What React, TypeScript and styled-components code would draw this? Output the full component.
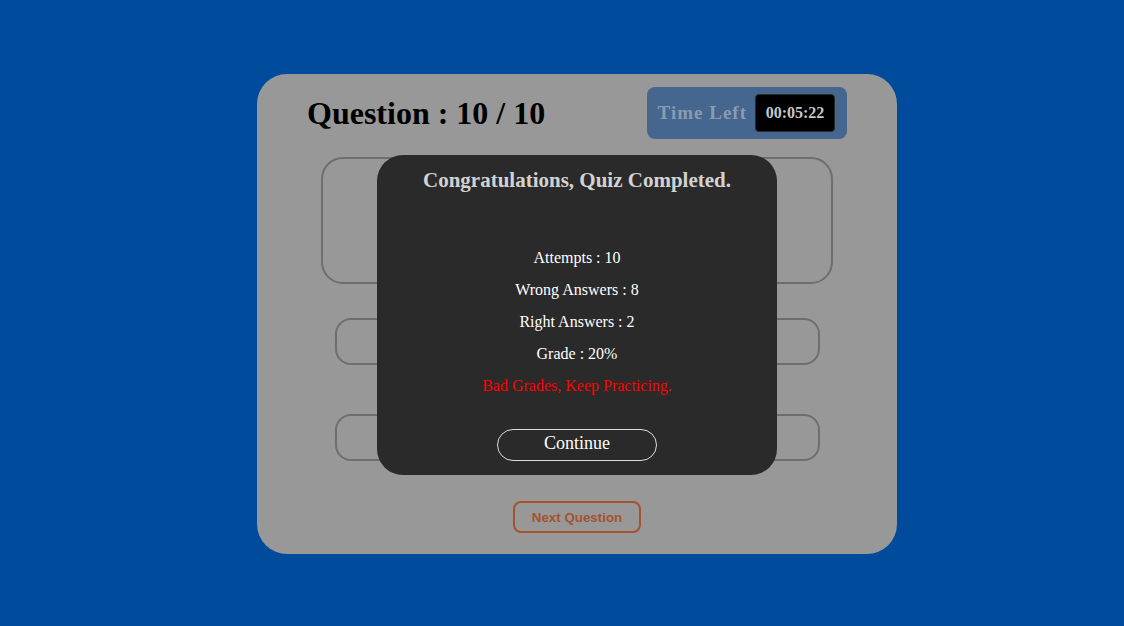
import React from 'react';
import styled, { createGlobalStyle } from 'styled-components';

const GlobalStyle = createGlobalStyle`
  html, body {
    margin: 0;
    padding: 0;
    background: #004b9b;
    font-family: "Liberation Serif", "Times New Roman", serif;
  }
`;

const Page = styled('div')`
  display: flex;
  justify-content: center;
  padding: 74px 0 0 30px;
  min-height: 626px;
  box-sizing: border-box;
`;

const QuizCard = styled('div')`
  position: relative;
  width: 640px;
  height: 480px;
  box-sizing: border-box;
  padding: 13px 50px 21px;
  background: #989898;
  border-radius: 30px;
  display: flex;
  flex-direction: column;
  align-items: center;
`;

const Header = styled('div')`
  align-self: stretch;
  display: flex;
  align-items: center;
  justify-content: space-between;
  height: 52px;
`;

const QuestionTitle = styled('h1')`
  margin: 0;
  font-size: 32px;
  font-weight: bold;
  color: #000;
`;

const Timer = styled('div')`
  display: flex;
  align-items: center;
  gap: 8px;
  height: 52px;
  box-sizing: border-box;
  padding: 7px 12px 7px 11px;
  background: #44668f;
  border-radius: 8px;
`;

const TimerLabel = styled('span')`
  font-size: 19px;
  font-weight: bold;
  letter-spacing: 1px;
  color: #8a9bb1;
`;

const TimerValue = styled('span')`
  display: flex;
  align-items: center;
  justify-content: center;
  width: 80px;
  height: 38px;
  box-sizing: border-box;
  background: #000;
  border: 1px solid #2a2a2a;
  border-radius: 4px;
  color: #c8c8c8;
  font-size: 16px;
  font-weight: bold;
`;

const QuestionBox = styled('div')`
  margin-top: 18px;
  width: 512px;
  height: 127px;
  box-sizing: border-box;
  border: 2px solid #6e6e6e;
  border-radius: 22px;
`;

const Options = styled('div')`
  margin-top: 34px;
  display: grid;
  grid-template-columns: 225px 225px;
  column-gap: 35px;
  row-gap: 49px;
`;

const Option = styled('div')`
  height: 47px;
  box-sizing: border-box;
  border: 2px solid #6e6e6e;
  border-radius: 16px;
`;

const NextButton = styled('button')`
  margin-top: 40px;
  width: 128px;
  height: 32px;
  background: transparent;
  border: 2px solid #a5532f;
  border-radius: 8px;
  color: #a5532f;
  font-family: "Liberation Sans", Arial, sans-serif;
  font-size: 13.333px;
  font-weight: bold;
  padding: 0;
`;

const Overlay = styled('div')`
  position: absolute;
  inset: 0;
  display: flex;
  align-items: center;
  justify-content: center;
`;

const ResultModal = styled('div')`
  width: 400px;
  height: 320px;
  margin-top: 2px;
  box-sizing: border-box;
  padding: 13px 20px 14px;
  background: #2a2a2a;
  border-radius: 26px;
  display: flex;
  flex-direction: column;
  align-items: center;
`;

const ModalTitle = styled('h2')`
  margin: 0;
  font-size: 21px;
  line-height: 24px;
  font-weight: bold;
  color: #d2d2d2;
`;

const Stats = styled('div')`
  margin-top: 57px;
  display: flex;
  flex-direction: column;
  align-items: center;
  gap: 14px;
`;

const StatLine = styled('p')<{ $warn?: boolean }>`
  margin: 0;
  font-size: 16px;
  line-height: 18px;
  color: ${(p) => (p.$warn ? '#ff0000' : '#ffffff')};
`;

const ContinueButton = styled('button')`
  margin-top: 34px;
  width: 160px;
  height: 32px;
  background: transparent;
  border: 1px solid #dcdcdc;
  border-radius: 16px;
  color: #fff;
  font-family: "Liberation Serif", "Times New Roman", serif;
  font-size: 18px;
  padding: 0 0 3px;
`;

const stats = [
  'Attempts : 10',
  'Wrong Answers : 8',
  'Right Answers : 2',
  'Grade : 20%',
];

export default function App() {
  return (
    <>
      <GlobalStyle />
      <Page>
        <QuizCard>
          <Header>
            <QuestionTitle>Question : 10 / 10</QuestionTitle>
            <Timer>
              <TimerLabel>Time Left</TimerLabel>
              <TimerValue>00:05:22</TimerValue>
            </Timer>
          </Header>
          <QuestionBox />
          <Options>
            <Option />
            <Option />
            <Option />
            <Option />
          </Options>
          <NextButton>Next Question</NextButton>
          <Overlay>
            <ResultModal>
              <ModalTitle>Congratulations, Quiz Completed.</ModalTitle>
              <Stats>
                {stats.map((s) => (
                  <StatLine key={s}>{s}</StatLine>
                ))}
                <StatLine $warn>Bad Grades, Keep Practicing.</StatLine>
              </Stats>
              <ContinueButton>Continue</ContinueButton>
            </ResultModal>
          </Overlay>
        </QuizCard>
      </Page>
    </>
  );
}
